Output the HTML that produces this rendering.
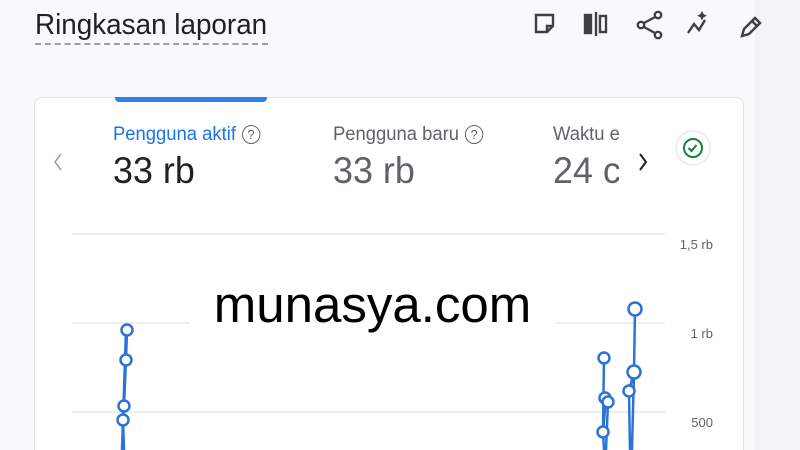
<!DOCTYPE html>
<html><head><style>
html,body{margin:0;width:800px;height:450px;overflow:hidden}
body{background:#f8f9fa;font-family:"Liberation Sans",sans-serif;position:relative}
.strip{position:absolute;left:755px;top:0;width:45px;height:450px;background:#f1f3f4}
.title{position:absolute;left:35px;top:9px;font-size:29px;color:#202124;transform:scaleX(0.96);transform-origin:left}
.dash{position:absolute;left:35px;top:43px;width:233px;border-top:2px dashed #9aa0a6}
.card{position:absolute;left:34px;top:97px;width:710px;height:353px;background:#fff;border:1px solid #e3e5e8;border-bottom:none;border-radius:8px 8px 0 0;box-sizing:border-box}
.tab{position:absolute;left:115px;top:97px;width:152px;height:5px;background:#1a73e8;border-radius:0 0 4px 4px;opacity:.9}
.lbl{position:absolute;top:124px;font-size:19px;transform:scaleX(.97);transform-origin:left;white-space:nowrap}
.q{display:inline-block;width:17px;height:17px;border:1.6px solid #5f6368;border-radius:50%;font-size:13px;text-align:center;line-height:17px;color:#5f6368;margin-left:6px;vertical-align:1px}
.val{position:absolute;top:150px;font-size:37px;transform:scaleX(.97);transform-origin:left}
.grid{position:absolute;left:72px;width:593px;border-top:2px solid #eceef0}
.ax{position:absolute;font-size:13px;color:#5f6368;right:87px}
.wm{position:absolute;left:190px;top:278px;width:365px;height:54px;background:#fff;text-align:center;font-size:51px;color:#000;line-height:54px;white-space:nowrap}
</style></head><body>
<div class="strip"></div>
<div class="title">Ringkasan laporan</div>
<div class="dash"></div>
<svg style="position:absolute;left:530px;top:8px" width="240" height="36" fill="none" stroke="#3c4043" stroke-width="2.4">
<path d="M6 7h17v11l-6 6H6z M17 24v-6h6"/>
<rect x="55" y="7" width="6" height="18" fill="#3c4043"/><line x1="66" y1="4" x2="66" y2="28"/><rect x="70" y="8" width="6" height="16"/>
<circle cx="128" cy="7" r="3.2"/><circle cx="111" cy="17" r="3.2"/><circle cx="128" cy="27" r="3.2"/><path d="M114 15l11-6M114 19l11 6"/>
<path d="M158 25l6-9 5 6 6-10"/><path d="M172 4l1.2 2.5 2.5 1.2-2.5 1.2-1.2 2.5-1.2-2.5-2.5-1.2 2.5-1.2z" fill="#3c4043" stroke-width="1"/>
<path d="M212 28l2-7 11-11 5 5-11 11z M222 13l5 5"/>
</svg>
<div class="card"></div>
<div class="tab"></div>
<div class="lbl" style="left:113px;color:#1a73e8">Pengguna aktif<span class="q">?</span></div>
<div class="lbl" style="left:333px;color:#5f6368">Pengguna baru<span class="q">?</span></div>
<div class="lbl" style="left:553px;color:#5f6368">Waktu e</div>
<div class="val" style="left:113px;color:#202124">33 rb</div>
<div class="val" style="left:333px;color:#5f6368">33 rb</div>
<div class="val" style="left:553px;color:#5f6368">24 c</div>
<div style="position:absolute;left:619px;top:120px;width:14px;height:75px;background:#fff"></div>
<svg style="position:absolute;left:45px;top:150px" width="30" height="25"><path d="M16 4l-6 8 6 8" stroke="#9aa0a6" stroke-width="1.5" fill="none"/></svg>
<svg style="position:absolute;left:632px;top:150px" width="30" height="25"><path d="M8 4l6 8-6 8" stroke="#202124" stroke-width="2" fill="none"/></svg>
<svg style="position:absolute;left:672px;top:128px" width="40" height="40"><circle cx="21" cy="20" r="17" fill="#fff" stroke="#e8eaed" stroke-width="1.5"/><circle cx="21" cy="20" r="9" fill="none" stroke="#188038" stroke-width="2"/><path d="M16.5 20l3 3 5-6" stroke="#188038" stroke-width="2" fill="none"/></svg>
<div class="grid" style="top:233px"></div>
<div class="grid" style="top:322px"></div>
<div class="grid" style="top:411px"></div>
<div class="ax" style="top:237px">1,5 rb</div>
<div class="ax" style="top:326px">1 rb</div>
<div class="ax" style="top:415px">500</div>
<div class="wm">munasya.com</div>
<svg style="position:absolute;left:0;top:0" width="800" height="450" fill="#fff" stroke="#2b73d6" stroke-width="2.5">
<path d="M127 330L126 360 124 406 123 420 124 450M126 330L122 450" fill="none"/>
<path d="M604 358L603 432 606 398 608 402 606 450M635 309L634 372 629 391 630 450M634 372L632 450M603 432L604 450" fill="none"/>
<circle cx="127" cy="330" r="5.5"/><circle cx="126" cy="360" r="5.5"/><circle cx="124" cy="406" r="5.5"/><circle cx="123" cy="420" r="5.5"/>
<circle cx="604" cy="358" r="5.5"/><circle cx="603" cy="432" r="5.5"/><circle cx="605" cy="398" r="5.5"/><circle cx="608" cy="402" r="5.5"/>
<circle cx="635" cy="309" r="6.5"/><circle cx="634" cy="372" r="6.5"/><circle cx="629" cy="391" r="5.5"/>
</svg>
</body></html>
